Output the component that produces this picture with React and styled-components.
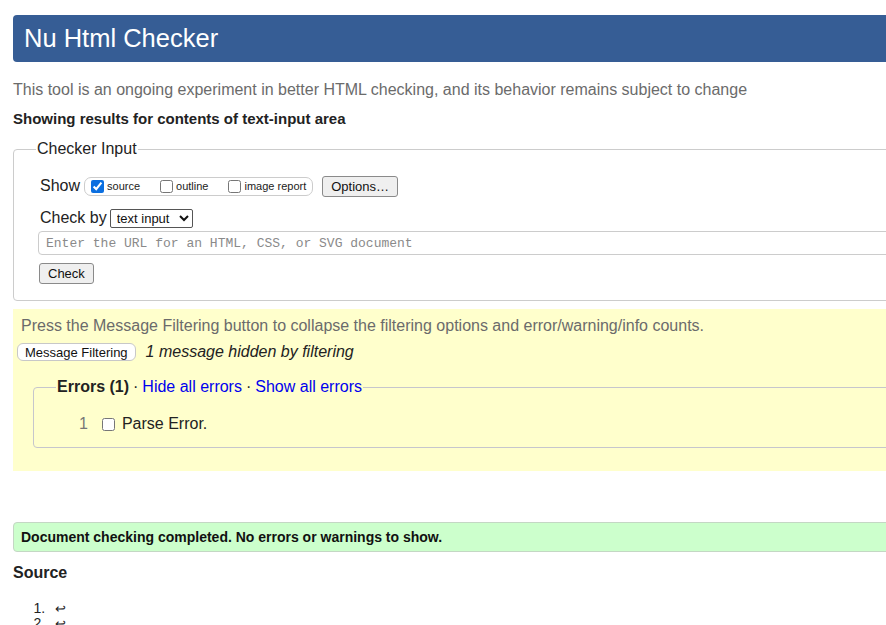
import React from 'react';
import styled, { createGlobalStyle } from 'styled-components';

const GlobalStyle = createGlobalStyle`
  html, body {
    margin: 0;
    padding: 0;
    overflow: hidden;
    background: #fff;
  }
  body {
    font-family: "Liberation Sans", Arial, sans-serif;
    color: #222;
  }
`;

const Page = styled.div`
  width: 940px;
  padding: 15px 0 0 13px;
`;

const Header = styled.h1`
  margin: 0;
  height: 47px;
  display: flex;
  align-items: center;
  padding-left: 11px;
  background: #365d95;
  color: #fff;
  font-size: 25.5px;
  font-weight: normal;
  border-radius: 4px 0 0 4px;
`;

const Intro = styled.p`
  margin: 18px 0 0;
  line-height: 20px;
  font-size: 16px;
  color: #6b6b6b;
`;

const Showing = styled.p`
  margin: 9px 0 0;
  line-height: 20px;
  font-size: 15px;
  font-weight: bold;
  color: #222;
`;

const Fieldset = styled.fieldset`
  margin: ${(p) => p.$mt || 0}px 0 0 ${(p) => p.$ml || 0}px;
  padding: 0 0 ${(p) => p.$pb || 0}px ${(p) => p.$pl || 0}px;
  border: 1px solid ${(p) => p.$border || '#ccc'};
  border-radius: 4px;
  min-width: 0;
`;

const Legend = styled.legend`
  margin-left: ${(p) => p.$ml || 0}px;
  padding: 0 1px;
  font-size: 16px;
  line-height: 20px;
  font-weight: ${(p) => (p.$bold ? 'bold' : 'normal')};
  color: #222;
`;

const Row = styled.div`
  display: flex;
  align-items: center;
  margin-top: ${(p) => p.$mt || 0}px;
  height: ${(p) => p.$h || 20}px;
  font-size: 16px;
`;

const Label = styled.span`
  font-size: 16px;
  color: #222;
  margin-right: ${(p) => p.$mr || 4}px;
`;

const ShowGroup = styled.div`
  display: flex;
  align-items: center;
  height: 17px;
  padding: 0 6px 0 6px;
  border: 1px solid #ccc;
  border-radius: 7px;
  gap: 20px;
`;

const Opt = styled.label`
  display: flex;
  align-items: center;
  font-size: 11px;
  color: #222;
`;

const Check = styled.input.attrs({ type: 'checkbox' })`
  width: 13px;
  height: 13px;
  margin: 0 ${(p) => p.$gap ?? 3}px 0 0;
  accent-color: #0b6fe0;
`;

const Button = styled.button`
  font-family: "Liberation Sans", Arial, sans-serif;
  font-size: 13px;
  color: #111;
  height: ${(p) => p.$h || 21}px;
  padding: 0 ${(p) => p.$px || 8}px;
  background: ${(p) => p.$bg || '#efefef'};
  border: 1px solid ${(p) => p.$border || '#8a8a8a'};
  border-radius: ${(p) => p.$r || 3}px;
  margin-left: ${(p) => p.$ml || 0}px;
`;

const Select = styled.select`
  font-family: "Liberation Sans", Arial, sans-serif;
  font-size: 13px;
  height: 19px;
  width: 83px;
  padding: 0 2px;
  border: 1px solid #555;
  border-radius: 2px;
  background: #fff;
  color: #111;
`;

const UrlInput = styled.input`
  display: block;
  box-sizing: border-box;
  margin: 3px 0 0 -2px;
  width: 870px;
  height: 24px;
  padding: 0 7px;
  font-family: "Liberation Mono", "DejaVu Sans Mono", monospace;
  font-size: 13px;
  border: 1px solid #ccc;
  border-radius: 4px;
  &::placeholder {
    color: #8a8a8a;
  }
`;

const Filters = styled.div`
  margin-top: 8px;
  height: 162px;
  padding: 7px 0 0 4px;
  box-sizing: border-box;
  background: #ffffcc;
`;

const Note = styled.p`
  margin: 0 0 0 4px;
  line-height: 20px;
  font-size: 16px;
  color: #6b6b6b;
`;

const Hidden = styled.em`
  margin-left: 10px;
  font-size: 16px;
  color: #222;
`;

const Link = styled.a`
  color: #0000ee;
  font-weight: normal;
  text-decoration: none;
`;

const Dot = styled.span`
  font-weight: normal;
  margin: 0 4px;
`;

const ErrorRow = styled.div`
  display: flex;
  align-items: center;
  margin-top: 17px;
  height: 20px;
  font-size: 16px;
  color: #222;
`;

const Num = styled.span`
  margin-right: 14px;
  color: #777;
`;

const ErrorText = styled.span`
  margin-left: 5px;
`;

const Done = styled.div`
  margin-top: 51px;
  height: 30px;
  box-sizing: border-box;
  display: flex;
  align-items: center;
  padding-left: 7px;
  background: #ccffcc;
  border: 1px solid #c4d7c4;
  border-radius: 4px 0 0 4px;
  font-size: 14px;
  font-weight: bold;
  color: #111;
`;

const SourceTitle = styled.h2`
  margin: 11px 0 0;
  line-height: 20px;
  font-size: 16px;
  font-weight: bold;
  color: #222;
`;

const Lines = styled.ol`
  margin: 18px 0 0;
  padding-left: 40px;
  font-size: 13px;
  line-height: 14px;
  color: #222;
  li {
    padding-left: 2px;
  }
  li::marker {
    content: counter(list-item) ".\\00a0\\00a0";
    font-size: 14px;
  }
`;

export default function App() {
  return (
    <>
      <GlobalStyle />
      <Page>
        <Header>Nu Html Checker</Header>
        <Intro>
          This tool is an ongoing experiment in better HTML checking, and its behavior remains
          subject to change
        </Intro>
        <Showing>Showing results for contents of text-input area</Showing>

        <Fieldset $mt={10} $pl={26} $pb={16}>
          <Legend $ml={-4}>Checker Input</Legend>
          <Row $mt={16} $h={22}>
            <Label>Show</Label>
            <ShowGroup>
              <Opt>
                <Check defaultChecked />
                source
              </Opt>
              <Opt>
                <Check />
                outline
              </Opt>
              <Opt>
                <Check />
                image report
              </Opt>
            </ShowGroup>
            <Button $ml={9}>Options…</Button>
          </Row>
          <Row $mt={11}>
            <Label $mr={3}>Check by</Label>
            <Select defaultValue="text">
              <option value="text">text input</option>
            </Select>
          </Row>
          <UrlInput placeholder="Enter the URL for an HTML, CSS, or SVG document" />
          <Row $mt={7} $h={22}>
            <Button $ml={-1}>Check</Button>
          </Row>
        </Fieldset>

        <Filters>
          <Note>
            Press the Message Filtering button to collapse the filtering options and
            error/warning/info counts.
          </Note>
          <Row $mt={6} $h={20}>
            <Button $h={18} $px={7} $bg="#fff" $border="#c8c8c8" $r={6}>
              Message Filtering
            </Button>
            <Hidden>1 message hidden by filtering</Hidden>
          </Row>
          <Fieldset $mt={15} $ml={16} $pl={45} $pb={13} $border="#c6c6cc">
            <Legend $ml={-23} $bold>
              Errors (1)
              <Dot>·</Dot>
              <Link href="#">Hide all errors</Link>
              <Dot>·</Dot>
              <Link href="#">Show all errors</Link>
            </Legend>
            <ErrorRow>
              <Num>1</Num>
              <Check $gap={2} />
              <ErrorText>Parse Error.</ErrorText>
            </ErrorRow>
          </Fieldset>
        </Filters>

        <Done>Document checking completed. No errors or warnings to show.</Done>
        <SourceTitle>Source</SourceTitle>
        <Lines>
          <li>↩</li>
          <li>↩</li>
        </Lines>
      </Page>
    </>
  );
}
